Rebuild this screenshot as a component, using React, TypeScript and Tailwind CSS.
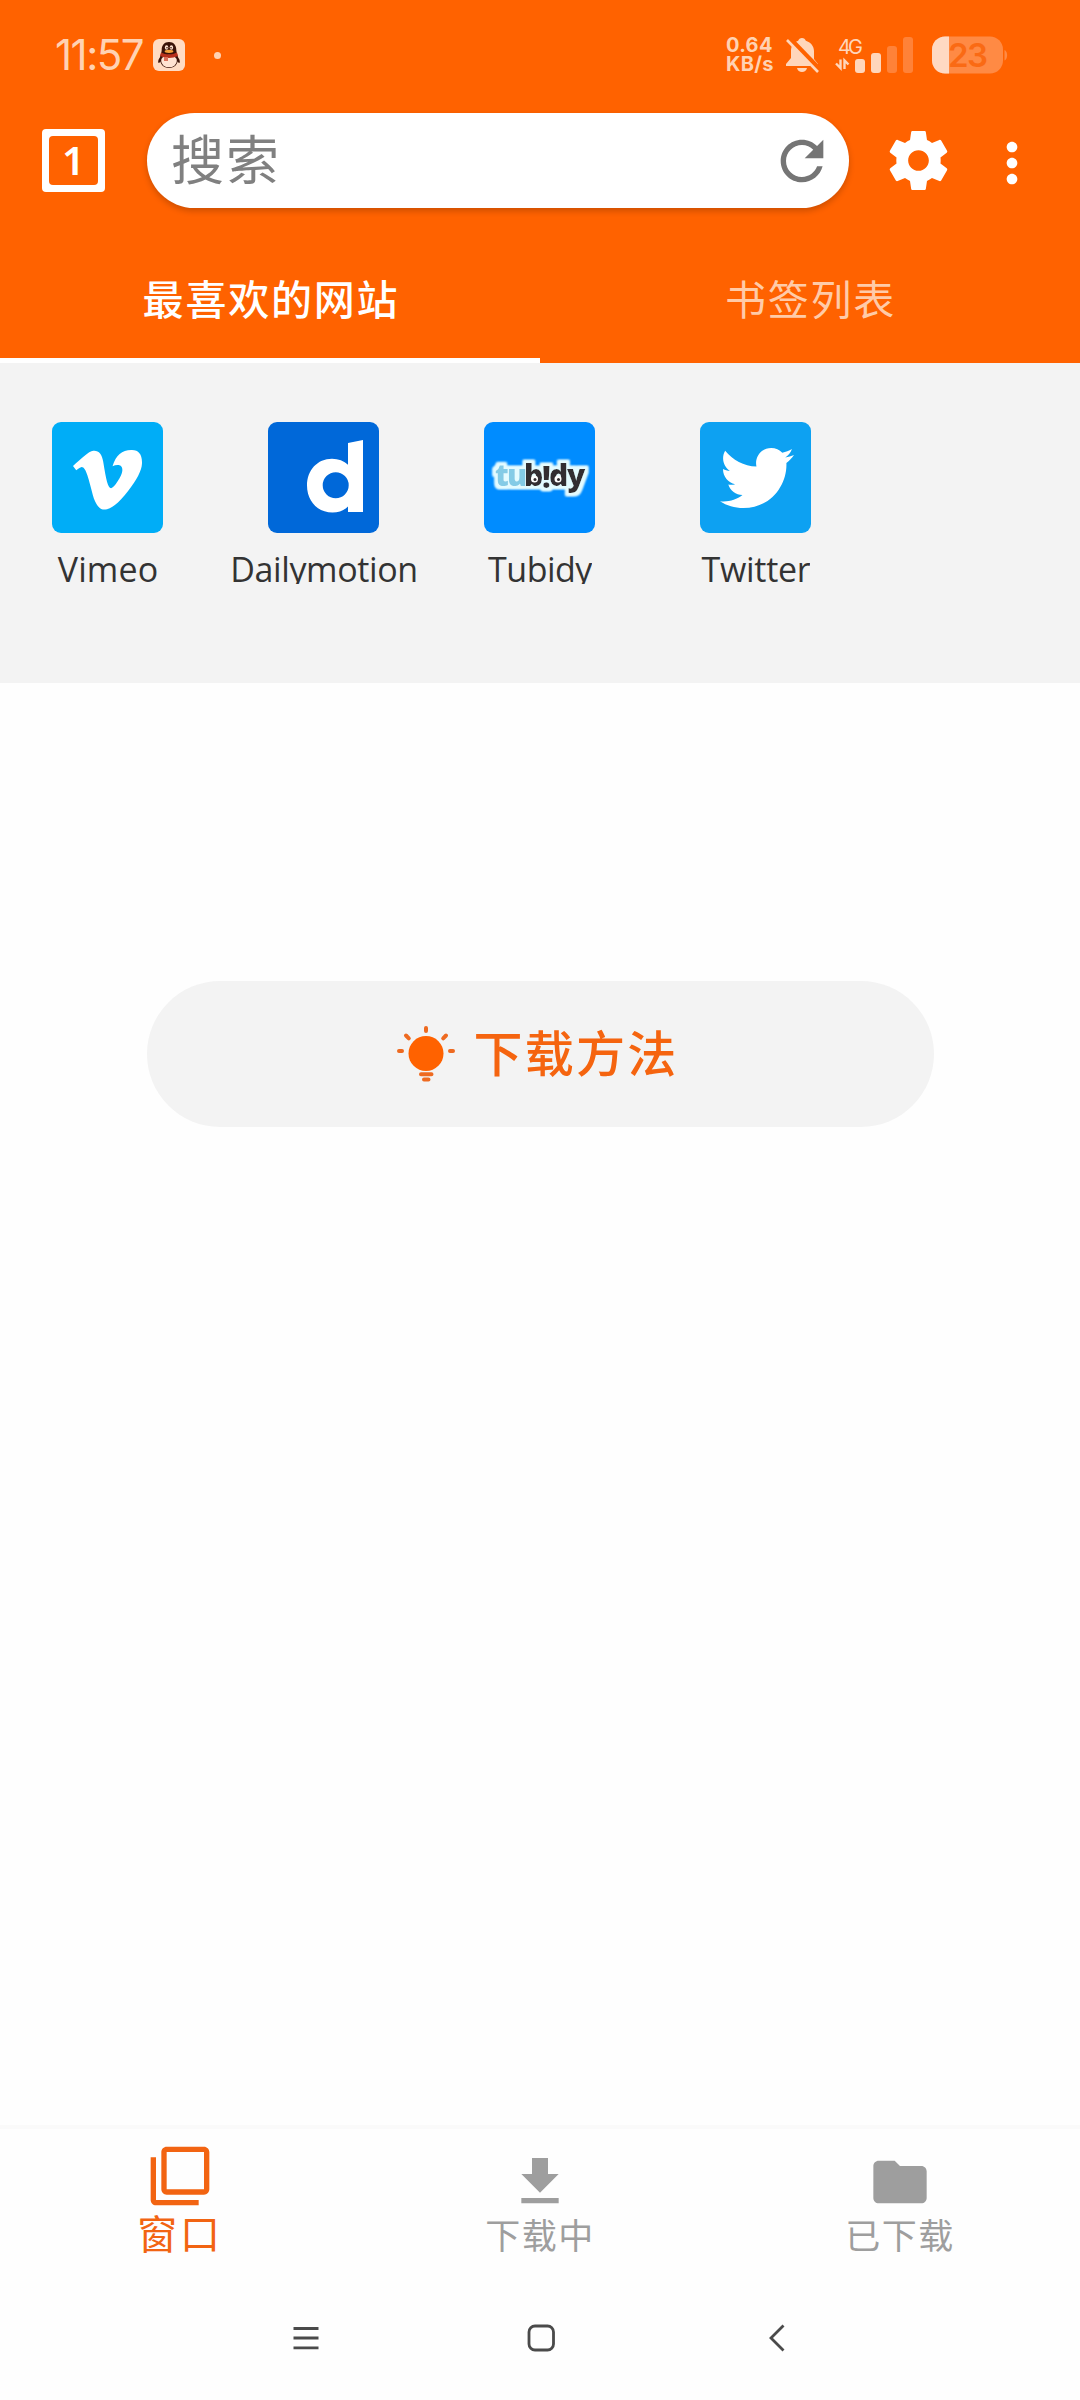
import type { ReactNode } from "react";
import { FaTwitter, FaVimeoV } from "react-icons/fa";

interface Site {
  name: string;
  tile: string;
  label: string;
  logo: ReactNode;
}

const ICONS = {
  refresh:
    "M17.65 6.35C16.2 4.9 14.21 4 12 4c-4.42 0-7.99 3.58-7.99 8s3.57 8 7.99 8c3.73 0 6.84-2.55 7.73-6h-2.08c-.82 2.33-3.04 4-5.65 4-3.31 0-6-2.69-6-6s2.69-6 6-6c1.66 0 3.14.69 4.22 1.78L13 11h7V4l-2.35 2.35z",
  settings:
    "M19.43 12.98c.04-.32.07-.64.07-.98s-.03-.66-.07-.98l2.11-1.65c.19-.15.24-.42.12-.64l-2-3.46c-.12-.22-.39-.3-.61-.22l-2.49 1c-.52-.4-1.08-.73-1.69-.98l-.38-2.65C14.46 2.18 14.25 2 14 2h-4c-.25 0-.46.18-.49.42l-.38 2.65c-.61.25-1.17.59-1.69.98l-2.49-1c-.23-.09-.49 0-.61.22l-2 3.46c-.13.22-.07.49.12.64l2.11 1.65c-.04.32-.07.65-.07.98s.03.66.07.98l-2.11 1.65c-.19.15-.24.42-.12.64l2 3.46c.12.22.39.3.61.22l2.49-1c.52.4 1.08.73 1.69.98l.38 2.65c.03.24.24.42.49.42h4c.25 0 .46-.18.49-.42l.38-2.65c.61-.25 1.17-.59 1.69-.98l2.49 1c.23.09.49 0 .61-.22l2-3.46c.12-.22.07-.49-.12-.64l-2.11-1.65zM12 15.5c-1.93 0-3.5-1.57-3.5-3.5s1.57-3.5 3.5-3.5 3.5 1.57 3.5 3.5-1.57 3.5-3.5 3.5z",
  more: "M12 8c1.1 0 2-.9 2-2s-.9-2-2-2-2 .9-2 2 .9 2 2 2zm0 2c-1.1 0-2 .9-2 2s.9 2 2 2 2-.9 2-2-.9-2-2-2zm0 6c-1.1 0-2 .9-2 2s.9 2 2 2 2-.9 2-2-.9-2-2-2z",
  windows:
    "M3 5H1v16c0 1.1.9 2 2 2h16v-2H3V5zm18-4H7c-1.1 0-2 .9-2 2v14c0 1.1.9 2 2 2h14c1.1 0 2-.9 2-2V3c0-1.1-.9-2-2-2zm0 16H7V3h14v14z",
  download: "M19 9h-4V3H9v6H5l7 7 7-7zM5 18v2h14v-2H5z",
  folder:
    "M10 4H4c-1.1 0-1.99.9-1.99 2L2 18c0 1.1.9 2 2 2h16c1.1 0 2-.9 2-2V8c0-1.1-.9-2-2-2h-8l-2-2z",
};

function Icon({ path, className }: { path: string; className?: string }) {
  return (
    <svg viewBox="0 0 24 24" fill="currentColor" className={className}>
      <path d={path} />
    </svg>
  );
}

function PenguinIcon() {
  return (
    <svg viewBox="0 0 32 32" className="ml-[10px] h-8 w-8">
      <rect width="32" height="32" rx="6" fill="#ffdcc4" />
      <path d="M8 17c-2 2-3.400 5-2.600 7 .8 0 1.800-1 2.600-2zM24 17c2 2 3.400 5 2.600 7-.8 0-1.800-1-2.600-2z" fill="#3a1208" />
      <path d="M16 3c-4.800 0-7.300 3.500-7.300 8 0 3-1.700 5-1.700 9 0 5 3.500 9 9 9s9-4 9-9c0-4-1.700-6-1.700-9 0-4.500-2.500-8-7.300-8z" fill="#3a1208" />
      <ellipse cx="16" cy="22" rx="7.800" ry="6.300" fill="#ffe3d2" />
      <path d="M8 13.500c5 2.500 11 2.500 16 0l1 3.500c-6 2.600-12 2.600-18 0z" fill="#b8301c" />
      <path d="M11 18h4v4h-4z" fill="#d9705a" />
      <ellipse cx="13.600" cy="8.500" rx="1.700" ry="2.200" fill="#ffe3d2" />
      <ellipse cx="18.400" cy="8.500" rx="1.700" ry="2.200" fill="#ffe3d2" />
      <circle cx="14" cy="8.800" r=".8" fill="#3a1208" />
      <circle cx="18" cy="8.800" r=".8" fill="#3a1208" />
      <ellipse cx="16" cy="12.300" rx="4.400" ry="1.600" fill="#f5a23c" />
    </svg>
  );
}

function BellOffIcon() {
  return (
    <svg viewBox="0 0 34 36" className="ml-[11px] h-9 w-[34px]">
      <path d="M17 1c-1.900 0-3.400 1.200-3.800 2.800C8.500 5.400 6 9 6 14v7l-5 6v2h32v-2l-4-5v-8c0-5-3.500-8.600-8.200-10.200C20.400 2.200 18.900 1 17 1z" fill="#ffd6bb" />
      <path d="M12 31h10c-.6 2.500-2.500 4-5 4s-4.400-1.500-5-4z" fill="#ffd6bb" />
      <path d="M3 .5l32 33" stroke="#ff6200" strokeWidth="6" />
      <path d="M2 3l31 32" stroke="#ffd6bb" strokeWidth="2.600" />
    </svg>
  );
}

function SignalIcon() {
  return (
    <svg viewBox="0 0 80 38" className="ml-4 h-[38px] w-20">
      <text x="3" y="18" fontSize="20" fill="#ffd6bb" textLength="25" className="font-['Inter']">
        4G
      </text>
      <g fill="none" stroke="#ffd6bb" strokeWidth="2.400">
        <path d="M5.500 23.500v8.500L1 27.500M9.500 33v-8.500l4 4" />
      </g>
      <rect x="20" y="23" width="10" height="14" rx="3" fill="#ffd6bb" />
      <rect x="36" y="17" width="10" height="20" rx="3" fill="#ffd6bb" />
      <rect x="52" y="10" width="10" height="27" rx="3" fill="#ff8238" />
      <rect x="68" y="1" width="10" height="36" rx="3" fill="#ff8238" />
    </svg>
  );
}

function BatteryIcon() {
  return (
    <svg viewBox="0 0 76 38" className="ml-[17px] h-[38px] w-[76px]">
      <defs>
        <clipPath id="battery">
          <rect y=".5" width="71" height="37" rx="13" />
        </clipPath>
      </defs>
      <g clipPath="url(#battery)">
        <rect width="71" height="38" fill="#ff8a44" />
        <rect width="17" height="38" fill="#ffd9c2" />
      </g>
      <path d="M72.500 14c3.500 1.500 3.500 9 0 10.500z" fill="#ff8a44" />
      <text x="16" y="30.500" fontSize="33" fontWeight="600" fill="#fa6a14" textLength="40" className="font-['Inter']">
        23
      </text>
    </svg>
  );
}

function StatusBar() {
  return (
    <div className="flex h-[113px] pt-9 pl-[55px] text-[#ffd2b3]">
      <div className="flex h-[38px] w-[671px] items-center">
        <span className="w-[88px] font-['Inter'] text-[42px] leading-none tracking-[-1.5px] whitespace-nowrap">11:57</span>
        <PenguinIcon />
        <span className="ml-[29px] h-[7px] w-[7px] rounded-full bg-[#ffd2b3]" />
      </div>
      <div className="flex h-[38px] items-center">
        <div className="w-12 font-['Inter'] text-[20px] leading-[19px] font-bold tracking-[0.3px] whitespace-nowrap">
          <div>0.64</div>
          <div>KB/s</div>
        </div>
        <BellOffIcon />
        <SignalIcon />
        <BatteryIcon />
      </div>
    </div>
  );
}

function SearchBar() {
  return (
    <div className="flex h-[95px] items-center pl-[42px] text-white">
      <button className="flex h-[63px] w-[63px] items-center justify-center rounded-[4px] bg-white">
        <span className="flex h-[49px] w-[49px] items-center justify-center rounded-[4px] bg-[#ff6200] pb-[2px] font-['Noto_Sans'] text-[40px] leading-none font-semibold">
          1
        </span>
      </button>
      <div className="ml-[42px] flex h-[95px] w-[702px] items-center justify-between rounded-full bg-white pr-[15px] pl-6 shadow-[0_3px_6px_rgba(0,0,0,0.2)]">
        <span className="pb-[7px] text-[53px] leading-[76px] tracking-[2px] text-[#808080]">搜索</span>
        <Icon path={ICONS.refresh} className="h-16 w-16 text-[#757575]" />
      </div>
      <Icon path={ICONS.settings} className="ml-[34px] h-[71px] w-[71px]" />
      <Icon path={ICONS.more} className="mt-[5px] ml-[26px] h-16 w-16" />
    </div>
  );
}

function Tabs() {
  return (
    <div className="grid h-[155px] grid-cols-2 text-center text-[41px] leading-[60px] tracking-[1.8px]">
      <div className="border-b-[5px] border-white pt-[59px] pl-[2px] font-medium text-white">最喜欢的网站</div>
      <div className="pt-[59px] pl-px text-[#ffcba8]">书签列表</div>
    </div>
  );
}

function TubidyLogo() {
  return (
    <svg viewBox="0 0 111 111" className="h-full w-full">
      <defs>
        <filter id="outline" x="-20%" y="-40%" width="140%" height="180%">
          <feMorphology in="SourceAlpha" operator="dilate" radius="3" />
          <feGaussianBlur stdDeviation="1" result="grown" />
          <feFlood floodColor="#e4fbff" />
          <feComposite in2="grown" operator="in" result="edge" />
          <feMerge>
            <feMergeNode in="edge" />
            <feMergeNode in="edge" />
            <feMergeNode in="SourceGraphic" />
          </feMerge>
        </filter>
      </defs>
      <g filter="url(#outline)">
        <text y="64" fontSize="30" fontWeight="800" fill="#332d31" className="font-['Open_Sans']">
          <tspan x="11 23" fill="#84cbe6">tu</tspan>
          <tspan x="40">b</tspan>
          <tspan x="58" dy="2">!</tspan>
          <tspan x="65 83" dy="-2">dy</tspan>
        </text>
      </g>
      <circle cx="50.500" cy="57" r="3.500" fill="#fff" />
      <circle cx="74" cy="57" r="3.500" fill="#fff" />
      <circle cx="51" cy="57.500" r="1.500" fill="#332d31" />
      <circle cx="74.500" cy="57.500" r="1.500" fill="#332d31" />
    </svg>
  );
}

const sites: Site[] = [
  {
    name: "Vimeo",
    tile: "bg-[#00adf7]",
    label: "tracking-[0.1px]",
    logo: <FaVimeoV className="mt-[3px] h-[79px] w-[69px]" />,
  },
  {
    name: "Dailymotion",
    tile: "bg-[#0068d9]",
    label: "tracking-[-0.4px]",
    logo: (
      <svg viewBox="0 0 111 111" className="h-full w-full">
        <path
          fill="#fff"
          fillRule="evenodd"
          d="M80 21l15-3v72H80v-5.500c-4 4-9.500 6-15.500 6C49.500 90.500 39 79 39 63.500S49.500 36.700 64 36.700c6.500 0 12 2 16 6zM67.700 50.300a13 13 0 1 0 0 26 13 13 0 1 0 0-26z"
        />
      </svg>
    ),
  },
  {
    name: "Tubidy",
    tile: "bg-[#008cff]",
    label: "tracking-[-0.5px]",
    logo: <TubidyLogo />,
  },
  {
    name: "Twitter",
    tile: "bg-[#0da1f2]",
    label: "tracking-[-0.3px]",
    logo: <FaTwitter className="ml-[3px] h-[74px] w-[74px]" />,
  },
];

function SiteGrid() {
  return (
    <div className="h-[320px] bg-[#f3f3f3] pt-[59px]">
      <div className="-ml-px grid w-[1080px] grid-cols-5">
        {sites.map((site) => (
          <div key={site.name} className="flex flex-col items-center">
            <div className={`flex h-[111px] w-[111px] items-center justify-center overflow-hidden rounded-[9px] text-white ${site.tile}`}>
              {site.logo}
            </div>
            <div className={`mt-3 h-[39px] overflow-hidden pl-[2px] font-['Open_Sans'] text-[34px] leading-[48px] text-[#333] ${site.label}`}>
              {site.name}
            </div>
          </div>
        ))}
      </div>
    </div>
  );
}

function BulbIcon() {
  return (
    <svg viewBox="0 0 58 56" className="h-14 w-[58px]">
      <circle cx="29" cy="27.500" r="17.500" fill="#ff6200" />
      <g stroke="#ee6a20" strokeWidth="4" strokeLinecap="round">
        <path d="M29 2v3M9 9.500l2.800 2.800M49 9.500l-2.800 2.800M2 25h3M53 25h3M24 48.200h10.500M27 53.500h4.500" />
      </g>
    </svg>
  );
}

function BottomNav() {
  return (
    <div className="grid h-[150px] grid-cols-3 border-t-4 border-[#fafafa] text-[#9e9e9e]">
      <div className="flex flex-col items-center pt-[15px] text-[#f26412]">
        <Icon path={ICONS.windows} className="h-16 w-16" />
        <span className="-mt-[4px] text-[40px] leading-[56px] tracking-[2.700px]">窗口</span>
      </div>
      <div className="flex flex-col items-center pt-[21px]">
        <Icon path={ICONS.download} className="h-16 w-16" />
        <span className="-mt-[5px] text-[35px] leading-[50px] tracking-[1.5px]">下载中</span>
      </div>
      <div className="flex flex-col items-center pt-[21px]">
        <Icon path={ICONS.folder} className="h-16 w-16" />
        <span className="-mt-[5px] text-[35px] leading-[50px] tracking-[1.5px]">已下载</span>
      </div>
    </div>
  );
}

function SystemNav() {
  return (
    <div className="flex h-[125px] items-start pt-[49px] pl-[293px] text-[#4a4a4a]">
      <svg viewBox="0 0 26 28" className="h-7 w-[26px]" stroke="currentColor" strokeWidth="2.800">
        <path d="M.5 4.500h25M.5 14h25M.5 23.800h25" />
      </svg>
      <svg viewBox="0 0 28 28" className="ml-[208px] h-7 w-7" fill="none" stroke="currentColor" strokeWidth="2.800">
        <rect x="2" y="2" width="24.500" height="24" rx="6" />
      </svg>
      <svg viewBox="0 0 18 28" className="ml-[213px] h-7 w-[18px]" fill="none" stroke="currentColor" strokeWidth="2.800">
        <path d="M15.500 1.500L3 14l12.500 12.500" />
      </svg>
    </div>
  );
}

export default function App() {
  return (
    <div className="flex h-[2400px] w-[1080px] flex-col overflow-hidden bg-[#fefefe] font-['Noto_Sans_CJK_SC',sans-serif]">
      <header className="bg-[#ff6200]">
        <StatusBar />
        <SearchBar />
        <Tabs />
      </header>
      <SiteGrid />
      <main className="flex flex-1 flex-col items-center pt-[298px]">
        <button className="flex h-[146px] w-[787px] items-center justify-center gap-[19px] rounded-full bg-[#f3f3f3] pr-[5px] text-[49px] leading-[70px] font-medium tracking-[2.200px] text-[#f5640f]">
          <BulbIcon />
          <span className="pb-[6px]">下载方法</span>
        </button>
      </main>
      <BottomNav />
      <SystemNav />
    </div>
  );
}
